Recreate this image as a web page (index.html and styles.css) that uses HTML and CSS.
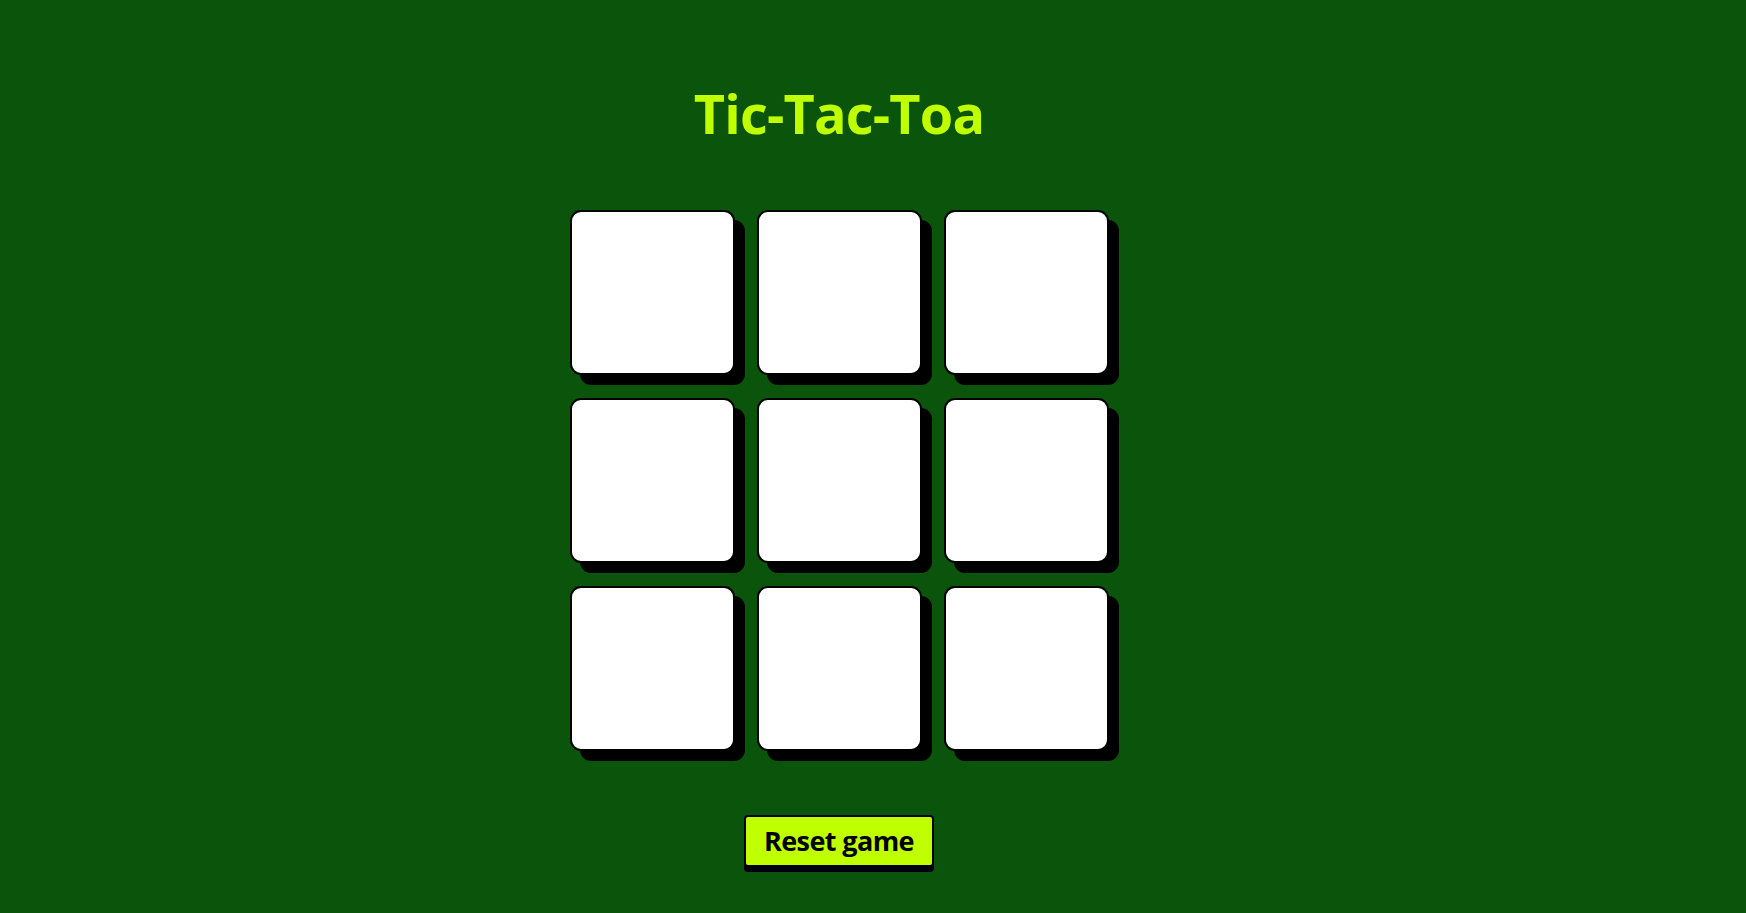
FILE: index.html
```html
<!DOCTYPE html>
<html lang="en">
<head>
<meta charset="utf-8">
<title>Tic-Tac-Toa</title>
<link rel="stylesheet" href="styles.css">
</head>
<body>
<main class="app">
  <h1 class="title">Tic-Tac-Toa</h1>
  <div class="board">
    <button class="cell"></button>
    <button class="cell"></button>
    <button class="cell"></button>
    <button class="cell"></button>
    <button class="cell"></button>
    <button class="cell"></button>
    <button class="cell"></button>
    <button class="cell"></button>
    <button class="cell"></button>
  </div>
  <button class="reset">Reset game</button>
</main>
</body>
</html>
```

FILE: styles.css
```css
html, body {
  margin: 0;
  padding: 0;
  background: #0b540b;
  height: 100%;
}

body {
  font-family: "Open Sans", "DejaVu Sans", sans-serif;
}

.app {
  width: 1678px;
  display: flex;
  flex-direction: column;
  align-items: center;
  padding-top: 81px;
}

.title {
  margin: 0;
  font-size: 54px;
  line-height: 1.2;
  font-weight: 700;
  letter-spacing: -0.8px;
  color: #bfff00;
}

.board {
  margin-top: 64px;
  display: grid;
  grid-template-columns: repeat(3, 165px);
  grid-auto-rows: 165px;
  column-gap: 22px;
  row-gap: 23px;
}

.cell {
  box-sizing: border-box;
  width: 165px;
  height: 165px;
  background: #ffffff;
  border: 2px solid #000;
  border-radius: 11px;
  box-shadow: 10px 10px 0 #000;
  padding: 0;
  cursor: pointer;
}

.reset {
  margin-top: 64px;
  box-sizing: border-box;
  height: 52px;
  padding: 0 18px;
  font-family: "Open Sans", "DejaVu Sans", sans-serif;
  font-size: 27px;
  line-height: 48px;
  font-weight: 700;
  letter-spacing: -0.6px;
  color: #000;
  background: #c0ff00;
  border: 2px solid #000010;
  border-radius: 4px;
  box-shadow: 0 5px 0 #000010;
  cursor: pointer;
}
```
